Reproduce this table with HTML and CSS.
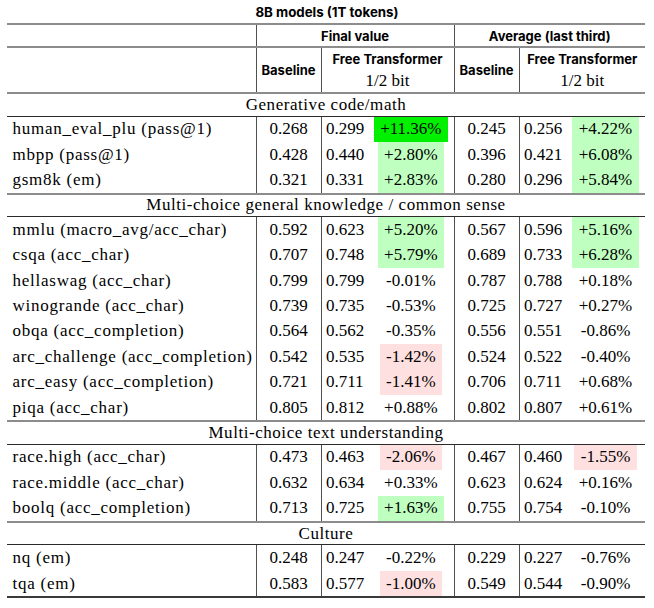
FILE: index.html
```html
<!DOCTYPE html>
<html>
<head>
<meta charset="utf-8">
<link rel="stylesheet" href="styles.css">
</head>
<body>
<div class="page">
  <div class="title">8B models (1T tokens)</div>
  <table class="results">
    <colgroup>
      <col class="c-name"><col class="c-base"><col class="c-ft"><col class="c-base"><col class="c-ft2">
    </colgroup>
    <thead>
      <tr class="h1">
        <th></th>
        <th colspan="2" class="vl">Final value</th>
        <th colspan="2" class="vl">Average (last third)</th>
      </tr>
      <tr class="h2">
        <th></th>
        <th class="vl">Baseline</th>
        <th class="vl"><div class="ft-head"><span>Free Transformer</span><span class="bits">1/2 bit</span></div></th>
        <th class="vl">Baseline</th>
        <th class="vl"><div class="ft-head"><span>Free Transformer</span><span class="bits">1/2 bit</span></div></th>
      </tr>
    </thead>
    <tbody>
      <tr class="section"><td colspan="5">Generative code/math</td></tr>
      <tr><td class="name">human_eval_plu (pass@1)</td><td class="base vl">0.268</td><td class="ft vl"><div class="ftc"><span class="val">0.299</span><span class="dw"><span class="delta hi">+11.36%</span></span></div></td><td class="base vl">0.245</td><td class="ft vl"><div class="ftc"><span class="val">0.256</span><span class="dw dw2"><span class="delta up">+4.22%</span></span></div></td></tr>
      <tr><td class="name">mbpp (pass@1)</td><td class="base vl">0.428</td><td class="ft vl"><div class="ftc"><span class="val">0.440</span><span class="dw"><span class="delta up">+2.80%</span></span></div></td><td class="base vl">0.396</td><td class="ft vl"><div class="ftc"><span class="val">0.421</span><span class="dw dw2"><span class="delta up">+6.08%</span></span></div></td></tr>
      <tr><td class="name">gsm8k (em)</td><td class="base vl">0.321</td><td class="ft vl"><div class="ftc"><span class="val">0.331</span><span class="dw"><span class="delta up">+2.83%</span></span></div></td><td class="base vl">0.280</td><td class="ft vl"><div class="ftc"><span class="val">0.296</span><span class="dw dw2"><span class="delta up">+5.84%</span></span></div></td></tr>

      <tr class="section"><td colspan="5">Multi-choice general knowledge / common sense</td></tr>
      <tr><td class="name">mmlu (macro_avg/acc_char)</td><td class="base vl">0.592</td><td class="ft vl"><div class="ftc"><span class="val">0.623</span><span class="dw"><span class="delta up">+5.20%</span></span></div></td><td class="base vl">0.567</td><td class="ft vl"><div class="ftc"><span class="val">0.596</span><span class="dw dw2"><span class="delta up">+5.16%</span></span></div></td></tr>
      <tr><td class="name">csqa (acc_char)</td><td class="base vl">0.707</td><td class="ft vl"><div class="ftc"><span class="val">0.748</span><span class="dw"><span class="delta up">+5.79%</span></span></div></td><td class="base vl">0.689</td><td class="ft vl"><div class="ftc"><span class="val">0.733</span><span class="dw dw2"><span class="delta up">+6.28%</span></span></div></td></tr>
      <tr><td class="name">hellaswag (acc_char)</td><td class="base vl">0.799</td><td class="ft vl"><div class="ftc"><span class="val">0.799</span><span class="dw"><span class="delta">-0.01%</span></span></div></td><td class="base vl">0.787</td><td class="ft vl"><div class="ftc"><span class="val">0.788</span><span class="dw dw2"><span class="delta">+0.18%</span></span></div></td></tr>
      <tr><td class="name">winogrande (acc_char)</td><td class="base vl">0.739</td><td class="ft vl"><div class="ftc"><span class="val">0.735</span><span class="dw"><span class="delta">-0.53%</span></span></div></td><td class="base vl">0.725</td><td class="ft vl"><div class="ftc"><span class="val">0.727</span><span class="dw dw2"><span class="delta">+0.27%</span></span></div></td></tr>
      <tr><td class="name">obqa (acc_completion)</td><td class="base vl">0.564</td><td class="ft vl"><div class="ftc"><span class="val">0.562</span><span class="dw"><span class="delta">-0.35%</span></span></div></td><td class="base vl">0.556</td><td class="ft vl"><div class="ftc"><span class="val">0.551</span><span class="dw dw2"><span class="delta">-0.86%</span></span></div></td></tr>
      <tr><td class="name">arc_challenge (acc_completion)</td><td class="base vl">0.542</td><td class="ft vl"><div class="ftc"><span class="val">0.535</span><span class="dw"><span class="delta down">-1.42%</span></span></div></td><td class="base vl">0.524</td><td class="ft vl"><div class="ftc"><span class="val">0.522</span><span class="dw dw2"><span class="delta">-0.40%</span></span></div></td></tr>
      <tr><td class="name">arc_easy (acc_completion)</td><td class="base vl">0.721</td><td class="ft vl"><div class="ftc"><span class="val">0.711</span><span class="dw"><span class="delta down">-1.41%</span></span></div></td><td class="base vl">0.706</td><td class="ft vl"><div class="ftc"><span class="val">0.711</span><span class="dw dw2"><span class="delta">+0.68%</span></span></div></td></tr>
      <tr><td class="name">piqa (acc_char)</td><td class="base vl">0.805</td><td class="ft vl"><div class="ftc"><span class="val">0.812</span><span class="dw"><span class="delta">+0.88%</span></span></div></td><td class="base vl">0.802</td><td class="ft vl"><div class="ftc"><span class="val">0.807</span><span class="dw dw2"><span class="delta">+0.61%</span></span></div></td></tr>

      <tr class="section"><td colspan="5">Multi-choice text understanding</td></tr>
      <tr><td class="name">race.high (acc_char)</td><td class="base vl">0.473</td><td class="ft vl"><div class="ftc"><span class="val">0.463</span><span class="dw"><span class="delta down">-2.06%</span></span></div></td><td class="base vl">0.467</td><td class="ft vl"><div class="ftc"><span class="val">0.460</span><span class="dw dw2"><span class="delta down">-1.55%</span></span></div></td></tr>
      <tr><td class="name">race.middle (acc_char)</td><td class="base vl">0.632</td><td class="ft vl"><div class="ftc"><span class="val">0.634</span><span class="dw"><span class="delta">+0.33%</span></span></div></td><td class="base vl">0.623</td><td class="ft vl"><div class="ftc"><span class="val">0.624</span><span class="dw dw2"><span class="delta">+0.16%</span></span></div></td></tr>
      <tr><td class="name">boolq (acc_completion)</td><td class="base vl">0.713</td><td class="ft vl"><div class="ftc"><span class="val">0.725</span><span class="dw"><span class="delta up">+1.63%</span></span></div></td><td class="base vl">0.755</td><td class="ft vl"><div class="ftc"><span class="val">0.754</span><span class="dw dw2"><span class="delta">-0.10%</span></span></div></td></tr>

      <tr class="section"><td colspan="5">Culture</td></tr>
      <tr><td class="name">nq (em)</td><td class="base vl">0.248</td><td class="ft vl"><div class="ftc"><span class="val">0.247</span><span class="dw"><span class="delta">-0.22%</span></span></div></td><td class="base vl">0.229</td><td class="ft vl"><div class="ftc"><span class="val">0.227</span><span class="dw dw2"><span class="delta">-0.76%</span></span></div></td></tr>
      <tr><td class="name">tqa (em)</td><td class="base vl">0.583</td><td class="ft vl"><div class="ftc"><span class="val">0.577</span><span class="dw"><span class="delta down">-1.00%</span></span></div></td><td class="base vl">0.549</td><td class="ft vl"><div class="ftc"><span class="val">0.544</span><span class="dw dw2"><span class="delta">-0.90%</span></span></div></td></tr>
    </tbody>
  </table>
</div>
</body>
</html>
```

FILE: styles.css
```css
html, body {
  margin: 0;
  padding: 0;
  background: #fff;
}

.page {
  width: 654px;
  color: #000;
}

.title {
  height: 23px;
  line-height: 24px;
  text-align: center;
  font-family: Inter, "Liberation Sans", sans-serif;
  font-weight: 700;
  font-size: 13.3px;
}

.results {
  margin-left: 7px;
  width: 638px;
  table-layout: fixed;
  border-collapse: collapse;
  font-family: "Liberation Serif", serif;
  font-size: 17px;
  border-top: 2px solid #8c8c8c;
  border-bottom: 2px solid #3a3a3a;
}

.c-name { width: 249px; }
.c-base { width: 65px; }
.c-ft { width: 133px; }
.c-ft2 { width: 126px; }

.vl { border-left: 1px solid #505050; }

th {
  padding: 0;
  font-family: Inter, "Liberation Sans", sans-serif;
  font-weight: 700;
  font-size: 13px;
  text-align: center;
  vertical-align: middle;
}

.h1 th {
  height: 21px;
  border-bottom: 2px solid #8c8c8c;
}

.h2 th {
  height: 44px;
  border-bottom: 2px solid #8c8c8c;
}

.ft-head {
  display: flex;
  flex-direction: column;
  align-items: center;
}

.ft-head span {
  line-height: 22px;
}

.ft-head .bits {
  font-family: "Liberation Serif", serif;
  font-weight: 400;
  font-size: 17px;
}

td {
  padding: 0;
  height: 25.4px;
  vertical-align: middle;
}

.section td {
  height: 21.5px;
  text-align: center;
  letter-spacing: 0.55px;
  border-top: 2px solid #8c8c8c;
  border-bottom: 1px solid #2a2a2a;
}

.name {
  padding-left: 5.5px;
  letter-spacing: 0.75px;
  white-space: nowrap;
}

.base {
  text-align: center;
}

.ftc {
  display: flex;
  height: 25.4px;
  align-items: stretch;
}

.val {
  width: 47px;
  padding-left: 4.5px;
  box-sizing: border-box;
  display: flex;
  align-items: center;
}

.dw {
  width: 86px;
  display: flex;
  justify-content: center;
}

.dw2 {
  width: 80px;
}

.delta {
  display: flex;
  align-items: center;
  padding: 0 6.5px;
}

.hi { background: #00f000; }
.up { background: #bfffbf; }
.down { background: #ffe0e0; }
```
